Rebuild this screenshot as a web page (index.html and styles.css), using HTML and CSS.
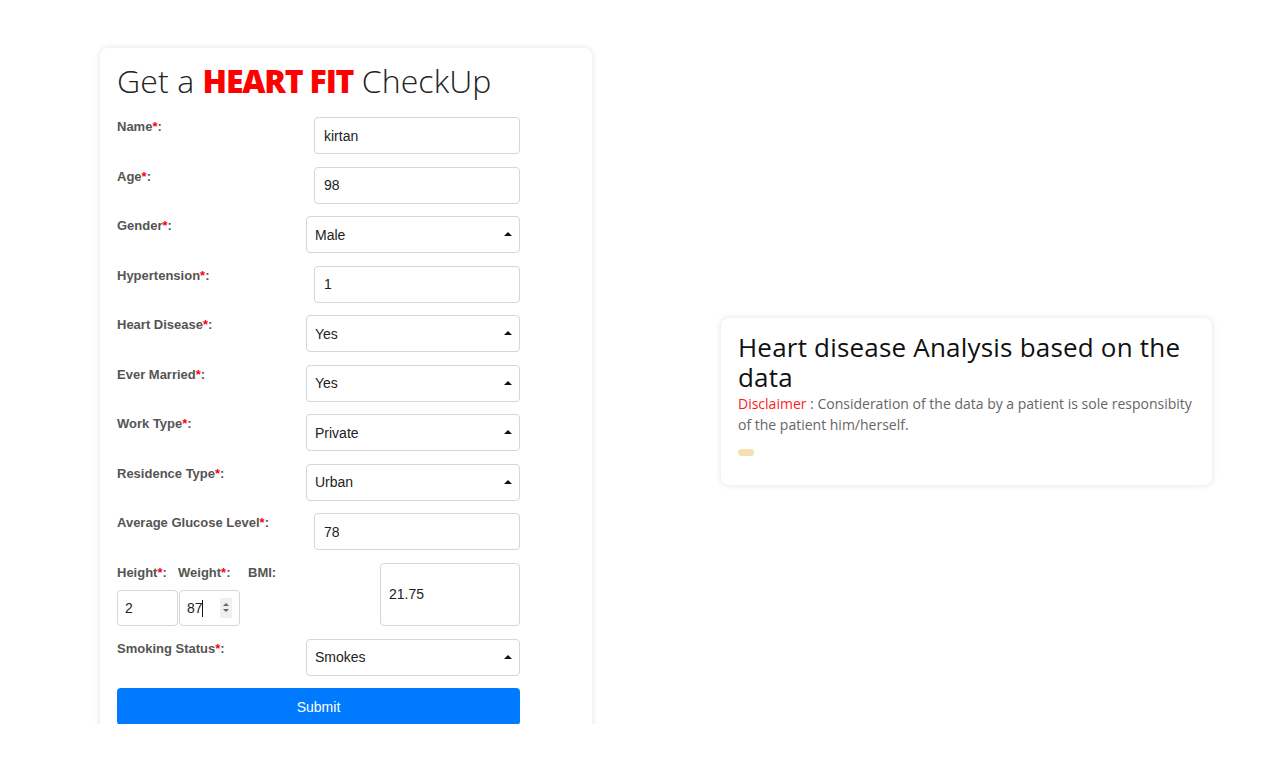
FILE: index.html
```html
<!DOCTYPE html>
<html lang="en">
<head>
<meta charset="utf-8">
<title>Heart Fit CheckUp</title>
<link rel="stylesheet" href="styles.css">
</head>
<body>
<div class="page">
  <div class="layout">
    <section class="card form-card">
      <h1 class="title">Get a <span class="brand">HEART FIT</span> CheckUp</h1>
      <form class="form">
        <div class="row">
          <label class="lbl">Name<span class="req">*</span>:</label>
          <input class="inp" type="text" value="kirtan">
        </div>
        <div class="row">
          <label class="lbl">Age<span class="req">*</span>:</label>
          <input class="inp" type="text" value="98">
        </div>
        <div class="row">
          <label class="lbl">Gender<span class="req">*</span>:</label>
          <div class="sel"><select><option>Male</option></select></div>
        </div>
        <div class="row">
          <label class="lbl">Hypertension<span class="req">*</span>:</label>
          <input class="inp" type="text" value="1">
        </div>
        <div class="row">
          <label class="lbl">Heart Disease<span class="req">*</span>:</label>
          <div class="sel"><select><option>Yes</option></select></div>
        </div>
        <div class="row">
          <label class="lbl">Ever Married<span class="req">*</span>:</label>
          <div class="sel"><select><option>Yes</option></select></div>
        </div>
        <div class="row">
          <label class="lbl">Work Type<span class="req">*</span>:</label>
          <div class="sel"><select><option>Private</option></select></div>
        </div>
        <div class="row">
          <label class="lbl">Residence Type<span class="req">*</span>:</label>
          <div class="sel"><select><option>Urban</option></select></div>
        </div>
        <div class="row">
          <label class="lbl">Average Glucose Level<span class="req">*</span>:</label>
          <input class="inp" type="text" value="78">
        </div>
        <div class="row row-bmi">
          <div class="hw">
            <label class="lbl hw-lbl">Height<span class="req">*</span>:</label>
            <label class="lbl hw-lbl">Weight<span class="req">*</span>:</label>
            <label class="lbl hw-lbl bmi-lbl">BMI:</label>
            <input class="small-inp" type="text" value="2">
            <div class="weight">
              <input class="small-inp" type="text" value="87">
              <span class="caret"></span>
              <span class="spin"><span class="up"></span><span class="down"></span></span>
            </div>
          </div>
          <input class="bmi-inp" type="text" value="21.75">
        </div>
        <div class="row row-smoke">
          <label class="lbl">Smoking Status<span class="req">*</span>:</label>
          <div class="sel"><select><option>Smokes</option></select></div>
        </div>
        <button class="submit" type="button">Submit</button>
      </form>
    </section>
    <section class="card info-card">
      <h2 class="info-title">Heart disease Analysis based on the data</h2>
      <p class="disclaimer"><span class="disc-red">Disclaimer</span> : Consideration of the data by a patient is sole responsibity of the patient him/herself.</p>
      <span class="pill"></span>
    </section>
  </div>
</div>
</body>
</html>
```
FILE: styles.css
```css
* { box-sizing: border-box; }
html, body { margin: 0; padding: 0; background: #fff; }
body { font-family: "Liberation Sans", Arial, sans-serif; }

.page {
  height: 724px;
  overflow: hidden;
}

.layout {
  display: flex;
  align-items: center;
  padding: 48px 0 0 100px;
  gap: 129px;
}

.card {
  background: #fff;
  border-radius: 8px;
  box-shadow: 0 0 6px rgba(0, 0, 0, 0.12);
}

.form-card {
  width: 492px;
  padding: 13px 17px 30px 17px;
}

.title {
  margin: 0 0 16px 0;
  font-family: "Open Sans", sans-serif;
  font-weight: 300;
  font-size: 32px;
  line-height: 40px;
  color: #222;
  letter-spacing: 0.1px;
  white-space: nowrap;
}

.brand {
  font-family: "Open Sans", sans-serif;
  font-weight: 800;
  color: #ff0000;
  letter-spacing: -1.2px;
}

.form { display: flex; flex-direction: column; }

.row {
  display: flex;
  align-items: flex-start;
  height: 37px;
  margin-bottom: 12.5px;
}

.lbl {
  width: 189px;
  flex: none;
  padding-top: 2px;
  font-size: 13px;
  font-weight: 700;
  color: #555;
  line-height: 16px;
}

.req { color: #ff0000; }

.inp, .small-inp, .bmi-inp, .sel select {
  font-family: "Liberation Sans", Arial, sans-serif;
  font-size: 14px;
  color: #222;
  background: #fff;
  border: 1px solid #d6d6d6;
  border-radius: 4px;
  outline: none;
}

.inp {
  width: 206px;
  height: 37px;
  margin-left: 8px;
  padding: 0 9px;
}

.sel {
  position: relative;
  width: 214px;
  height: 37px;
}

.sel select {
  width: 100%;
  height: 37px;
  padding: 0 8px;
  -webkit-appearance: none;
  appearance: none;
}

.sel::after {
  content: "";
  position: absolute;
  right: 8px;
  top: 16px;
  width: 0;
  height: 0;
  border-left: 4px solid transparent;
  border-right: 4px solid transparent;
  border-bottom: 4px solid #111;
  pointer-events: none;
}

.row-bmi {
  height: 63px;
  margin-bottom: 13px;
  width: 403px;
}

.hw {
  display: grid;
  grid-template-columns: 61px 61px auto;
  grid-template-rows: 27px 36px;
  column-gap: 0;
  width: 263px;
}

.hw-lbl {
  width: auto;
  padding-top: 2px;
  white-space: nowrap;
}

.bmi-lbl { padding-left: 9px; }

.small-inp {
  width: 61px;
  height: 36px;
  padding: 0 7px;
}

.weight {
  position: relative;
  width: 61px;
  height: 36px;
  margin-left: 1px;
}

.caret {
  position: absolute;
  left: 23px;
  top: 10px;
  width: 1px;
  height: 17px;
  background: #111;
}

.spin {
  position: absolute;
  right: 8px;
  top: 8px;
  width: 12px;
  height: 20px;
  background: #efefef;
  display: flex;
  flex-direction: column;
  align-items: center;
  justify-content: center;
  gap: 3px;
}

.up {
  width: 0; height: 0;
  border-left: 3px solid transparent;
  border-right: 3px solid transparent;
  border-bottom: 3px solid #666;
}

.down {
  width: 0; height: 0;
  border-left: 3px solid transparent;
  border-right: 3px solid transparent;
  border-top: 3px solid #666;
}

.bmi-inp {
  width: 140px;
  height: 63px;
  margin-left: auto;
  padding: 0 8px;
}

.submit {
  width: 403px;
  height: 37px;
  background: #007bff;
  border: none;
  border-radius: 4px;
  color: #fff;
  font-family: "Liberation Sans", Arial, sans-serif;
  font-size: 14px;
  padding: 0;
}

.info-card {
  width: 491px;
  height: 167px;
  padding: 14px 10px 20px 17px;
}

.info-title {
  margin: 0;
  font-family: "Open Sans", sans-serif;
  font-weight: 400;
  font-size: 26px;
  line-height: 30px;
  color: #111;
  letter-spacing: 0.2px;
}

.disclaimer {
  margin: 1px 0 0 0;
  font-family: "Open Sans", sans-serif;
  font-size: 14px;
  line-height: 21px;
  color: #666;
  letter-spacing: 0;
}

.disc-red { color: #ff1a1a; }

.pill {
  display: block;
  width: 16px;
  height: 7px;
  margin-top: 14px;
  border-radius: 4px;
  background: #f5deb3;
}
```
